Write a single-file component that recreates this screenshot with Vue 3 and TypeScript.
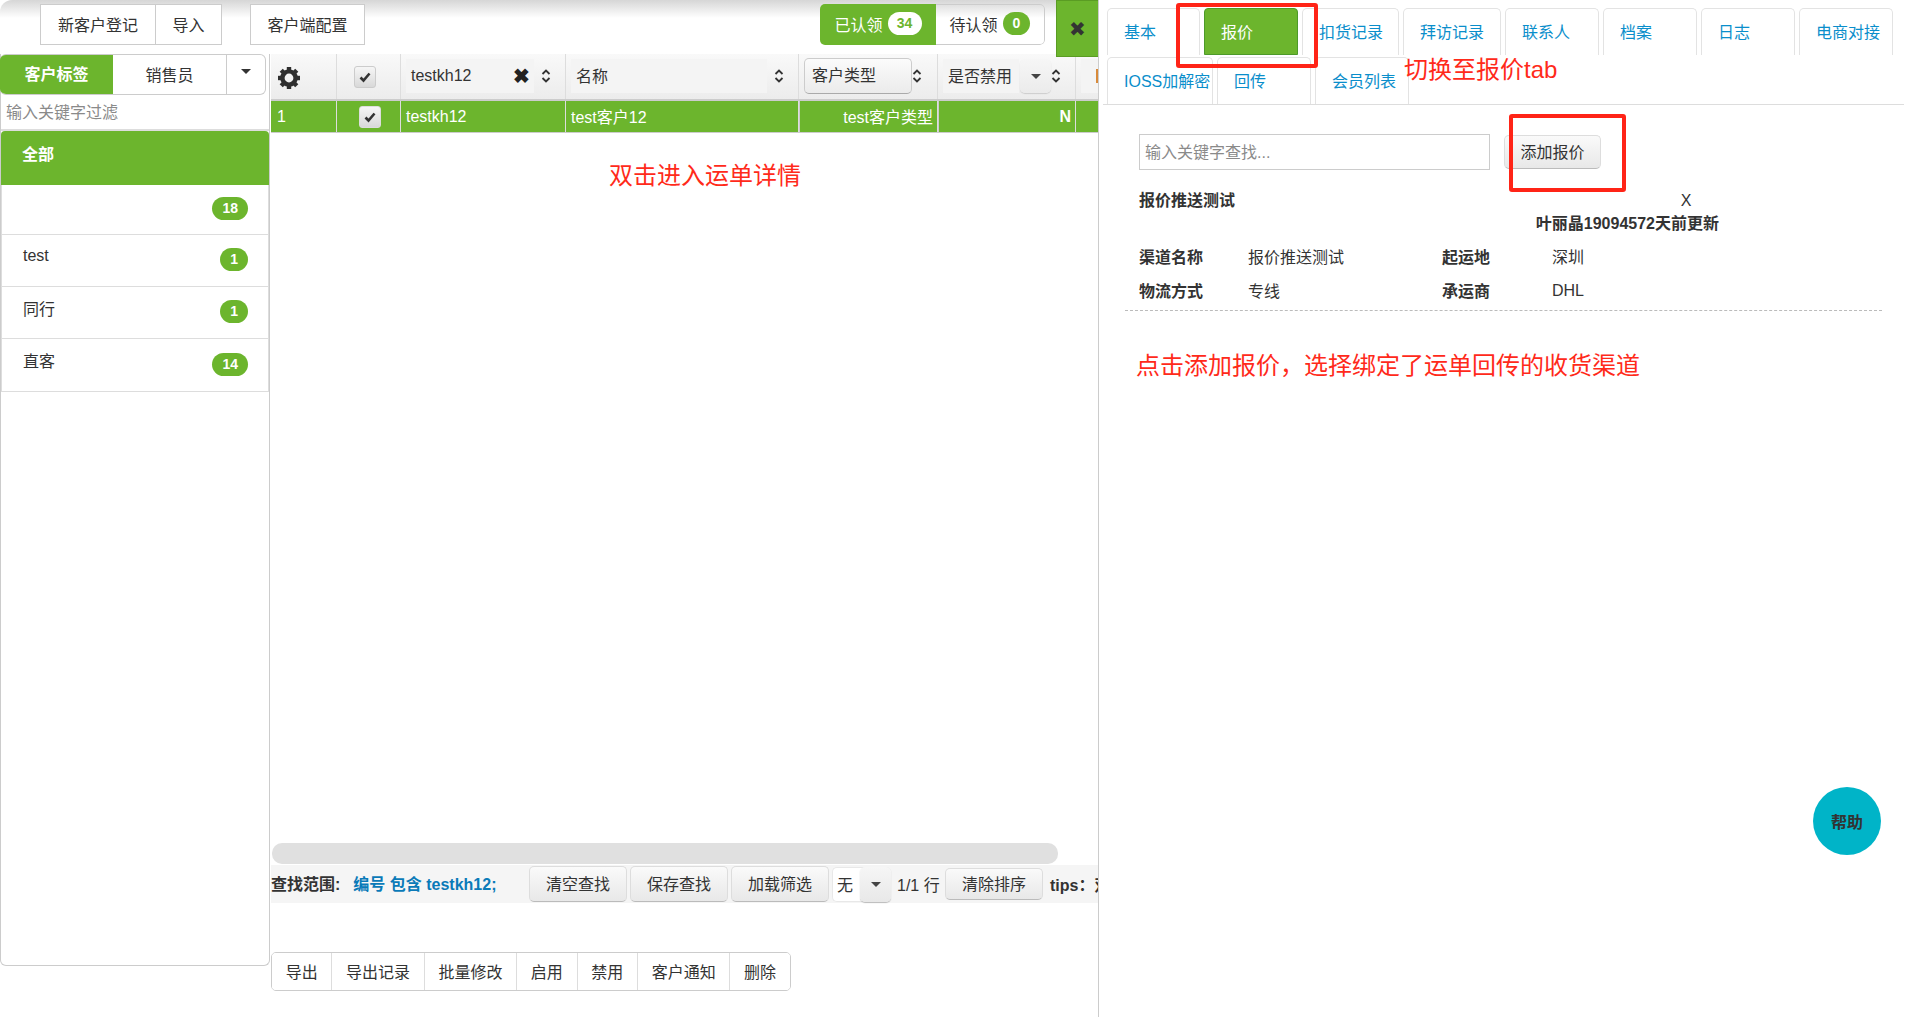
<script setup lang="ts">
const tagRows = [
  { name: "", count: 18, h: 50 },
  { name: "test", count: 1, h: 52 },
  { name: "同行", count: 1, h: 52 },
  { name: "直客", count: 14, h: 53 },
];
const tabs = [
  { label: "基本", w: 93 },
  { label: "报价", w: 94, active: true },
  { label: "扣货记录", w: 97 },
  { label: "拜访记录", w: 98 },
  { label: "联系人", w: 94 },
  { label: "档案", w: 94 },
  { label: "日志", w: 94 },
  { label: "电商对接", w: 94 },
  { label: "IOSS加解密", w: 106 },
  { label: "回传", w: 94 },
  { label: "会员列表", w: 94 },
];
const actions = ["导出", "导出记录", "批量修改", "启用", "禁用", "客户通知", "删除"];
const gearTeeth = [0, 45, 90, 135, 180, 225, 270, 315];
</script>

<template>
  <div class="page">
    <div class="left">
      <div class="topbar">
        <div class="btn-group">
          <button class="tb-btn w116">新客户登记</button>
          <button class="tb-btn w66">导入</button>
        </div>
        <button class="tb-btn w115 cfg">客户端配置</button>
        <div class="claim">
          <div class="claim-on">已认领<span class="pill white">34</span></div>
          <div class="claim-off">待认领<span class="pill green">0</span></div>
        </div>
        <div class="close-x">✖</div>
      </div>

      <div class="main">
        <aside class="side">
          <div class="side-tabs">
            <div class="side-tab on">客户标签</div>
            <div class="side-tab">销售员</div>
            <div class="side-caret"><i class="caret"></i></div>
          </div>
          <input class="side-filter" placeholder="输入关键字过滤" />
          <div class="side-all">全部</div>
          <div v-for="r in tagRows" :key="r.count + r.name" class="side-row" :style="{ height: r.h + 'px' }">
            <span class="side-name">{{ r.name }}</span>
            <span class="pill green">{{ r.count }}</span>
          </div>
        </aside>

        <section class="content">
          <div class="grid-wrap">
            <div class="thead">
              <div class="th">
                <svg class="gear" viewBox="0 0 24 24">
                  <circle cx="12" cy="12" r="6.6" fill="none" stroke="#2f2f2f" stroke-width="4.4" />
                  <rect v-for="a in gearTeeth" :key="a" x="9.8" y="1" width="4.4" height="5" fill="#2f2f2f" :transform="`rotate(${a} 12 12)`" />
                </svg>
              </div>
              <div class="th center">
                <span class="check-box head"><svg viewBox="0 0 16 16"><path d="M3.5 8.5l3 3 6-7" fill="none" stroke="#333" stroke-width="2.6" /></svg></span>
              </div>
              <div class="th">
                <div class="th-input w128"><span>testkh12</span><b class="clear">✖</b></div>
                <svg class="sort" viewBox="0 0 10 16"><path d="M1.5 6l3.5-3.5L8.5 6M1.5 10l3.5 3.5L8.5 10" fill="none" stroke="#333" stroke-width="1.8" /></svg>
              </div>
              <div class="th">
                <div class="th-input w196 cjk">名称</div>
                <svg class="sort" viewBox="0 0 10 16"><path d="M1.5 6l3.5-3.5L8.5 6M1.5 10l3.5 3.5L8.5 10" fill="none" stroke="#333" stroke-width="1.8" /></svg>
              </div>
              <div class="th">
                <div class="th-select">客户类型</div>
                <svg class="sort flush" viewBox="0 0 10 16"><path d="M1.5 6l3.5-3.5L8.5 6M1.5 10l3.5 3.5L8.5 10" fill="none" stroke="#333" stroke-width="1.8" /></svg>
              </div>
              <div class="th">
                <div class="th-input w76 cjk">是否禁用</div>
                <div class="th-caret"><i class="caret dark"></i></div>
                <svg class="sort flush" viewBox="0 0 10 16"><path d="M1.5 6l3.5-3.5L8.5 6M1.5 10l3.5 3.5L8.5 10" fill="none" stroke="#333" stroke-width="1.8" /></svg>
              </div>
              <div class="th last"><div class="th-input clipped"><i class="sliver"></i></div></div>
            </div>
            <div class="tr">
              <div class="td">1</div>
              <div class="td center"><span class="check-box row"><svg viewBox="0 0 16 16"><path d="M3.5 8.5l3 3 6-7" fill="none" stroke="#333" stroke-width="2.6" /></svg></span></div>
              <div class="td">testkh12</div>
              <div class="td cjk">test客户12</div>
              <div class="td right cjk">test客户类型</div>
              <div class="td right bold">N</div>
              <div class="td last"></div>
            </div>
          </div>

          <div class="hscroll"><div class="hscroll-thumb"></div></div>

          <div class="searchbar">
            <div class="scope"><b>查找范围:</b><b class="scope-val">编号 包含 testkh12;</b></div>
            <button class="sb-btn">清空查找</button>
            <button class="sb-btn">保存查找</button>
            <button class="sb-btn">加载筛选</button>
            <div class="sb-select"><span>无</span><div class="sb-caret"><i class="caret dark"></i></div></div>
            <span class="sb-count">1/1 行</span>
            <button class="sb-btn short">清除排序</button>
            <b class="sb-tips">tips：双击</b>
          </div>

          <div class="actions">
            <button v-for="a in actions" :key="a" class="act">{{ a }}</button>
          </div>
        </section>
      </div>
    </div>

    <div class="right">
      <div class="tabs">
        <div v-for="t in tabs" :key="t.label" class="tab" :class="{ active: t.active }" :style="{ width: t.w + 'px' }">{{ t.label }}</div>
      </div>
      <div class="pane">
        <div class="pane-search">
          <input class="pane-input" placeholder="输入关键字查找..." />
          <button class="add-btn">添加报价</button>
        </div>
        <div class="quote-head">
          <b>报价推送测试</b>
          <div class="quote-meta">
            <div class="quote-x">X</div>
            <b>叶丽晶19094572天前更新</b>
          </div>
        </div>
        <div class="quote-info">
          <b>渠道名称</b><span>报价推送测试</span><b>起运地</b><span>深圳</span>
          <b>物流方式</b><span>专线</span><b>承运商</b><span class="dhl">DHL</span>
        </div>
      </div>
      <div class="dash"></div>
    </div>

    <!-- 标注 -->
    <div class="note n1">双击进入运单详情</div>
    <div class="note n2">切换至报价tab</div>
    <div class="note n3">点击添加报价，选择绑定了运单回传的收货渠道</div>
    <div class="red-box b1"></div>
    <div class="red-box b2"></div>
    <div class="help">帮助</div>
  </div>
</template>

<style scoped>
.page { position: relative; display: flex; width: 1908px; height: 1017px; overflow: hidden; background: #fff; color: #333; font-family: "Liberation Sans", "Noto Sans CJK SC", sans-serif; font-size: 16px; }
button { font: inherit; color: #333; }
.left { width: 1098px; flex: none; display: flex; flex-direction: column; }

.topbar { position: relative; height: 54px; flex: none; display: flex; align-items: flex-start; padding: 4px 0 0 40px; box-sizing: border-box; background: linear-gradient(#d6d6d6, #fff 18px); border-top-left-radius: 12px; }
.btn-group { display: flex; }
.tb-btn { height: 41px; background: #fff; border: 1px solid #ccc; padding: 0 0 2px; }
.w116 { width: 116px; }
.w66 { width: 66px; margin-left: 0; border-left: 0; }
.w115 { width: 115px; }
.cfg { margin-left: 28px; }
.claim { display: flex; margin-left: 455px; height: 41px; border-radius: 5px; overflow: hidden; }
.claim-on { width: 116px; background: #6cb52d; color: #fff; display: flex; align-items: center; justify-content: center; gap: 5px; padding-bottom: 2px; box-sizing: border-box; }
.claim-off { width: 109px; border: 1px solid #ccc; border-left: 0; border-radius: 0 5px 5px 0; box-sizing: border-box; display: flex; align-items: center; justify-content: center; gap: 5px; padding-bottom: 2px; }
.pill { display: inline-block; min-width: 27px; height: 23px; line-height: 23px; text-align: center; font-size: 14px; font-weight: 700; border-radius: 12px; box-sizing: border-box; padding: 0 10px; }
.pill.white { background: #fff; color: #6cb52d; width: 34px; padding: 0; }
.pill.green { background: #6cb52d; color: #fff; }
.close-x { position: absolute; top: 0; right: 0; width: 42px; height: 57px; background: #6cb52d; border: 1px solid #5a9c23; border-right: 0; box-sizing: border-box; color: #333; font-size: 20px; display: flex; align-items: center; justify-content: center; z-index: 2; }

.main { flex: 1; display: flex; gap: 1px; min-height: 0; }
.side { width: 270px; height: 912px; flex: none; box-sizing: border-box; border: 1px solid #ccc; border-top: 0; border-radius: 0 0 6px 6px; }
.side-tabs { display: flex; height: 41px; margin-left: -1px; width: 266px; border: 1px solid #ccc; border-left: 0; border-radius: 6px; box-sizing: border-box; overflow: hidden; }
.side-tab { width: 114px; display: flex; align-items: center; justify-content: center; border-right: 1px solid #ccc; box-sizing: border-box; padding-bottom: 2px; }
.side-tab.on { width: 113px; background: #6cb52d; color: #fff; font-weight: 700; border: 0; padding-bottom: 4px; }
.side-caret { flex: 1; display: flex; align-items: center; justify-content: center; padding-bottom: 6px; }
.caret { width: 0; height: 0; border: 5px solid transparent; border-top: 5px solid #333; border-bottom: 0; display: block; }
.caret.dark { border-top-color: #444; }
.side-filter { display: block; width: 268px; height: 36px; margin-top: 0; padding: 2px 5px 0; box-sizing: border-box; border: 0; border-bottom: 2px solid #ddd; font: inherit; outline: none; }
.side-filter::placeholder { color: #8a8a8a; }
.side-all { height: 54px; background: #6cb52d; color: #fff; font-weight: 700; padding: 10px 0 0 21px; box-sizing: border-box; border-radius: 4px 4px 0 0; }
.side-row { display: flex; justify-content: space-between; align-items: center; padding: 0 20px 2px 21px; box-sizing: border-box; border-bottom: 1px solid #ddd; border-left: 1px solid #ddd; border-right: 1px solid #ddd; }
.side-name { margin-top: -8px; }

.content { width: 827px; flex: none; display: flex; flex-direction: column; overflow: hidden; }
.grid-wrap { flex: 1; min-height: 0; }
.thead, .tr { display: grid; grid-template-columns: 66px 64px 165px 233px 139px 138px 22px; }
.thead { height: 47px; background: linear-gradient(#f9f9f9, #ececec); border-bottom: 2px solid #ccc; box-sizing: border-box; }
.th { border-right: 1px solid #ddd; display: flex; align-items: center; padding-left: 5px; box-sizing: border-box; }
.th.center, .td.center { justify-content: center; padding: 0; }
.th.last { padding-left: 5px; border: 0; }
.gear { width: 24px; height: 24px; margin-left: 1px; margin-top: 3px; }
.check-box { display: flex; width: 22px; height: 22px; border: 1px solid #ccc; border-radius: 3px; background: linear-gradient(#f6f6f6, #d9d9d9); box-sizing: border-box; align-items: center; justify-content: center; }
.check-box svg { width: 16px; height: 16px; }
.check-box.head { margin-right: 7px; margin-top: 1px; }
.check-box.row { margin-left: 3px; border-color: #ddd; }
.th-input { height: 34px; background: #f4f4f4; display: flex; align-items: center; justify-content: space-between; padding-left: 5px; box-sizing: border-box; margin-top: -1px; }
.th-input.cjk { padding-bottom: 2px; }
.w128 { width: 128px; }
.w196 { width: 196px; }
.w76 { width: 76px; }
.clear { font-size: 20px; color: #222; margin-right: 4px; }
.sort { width: 10px; height: 16px; margin-left: 7px; flex: none; margin-top: -2px; }
.sort.flush { margin-left: 0; }
.th-select { width: 108px; height: 36px; border: 1px solid #ccc; border-bottom-color: #aaa; border-radius: 5px; background: linear-gradient(#fbfbfb, #ebebeb); padding-left: 7px; line-height: 34px; box-sizing: border-box; margin-top: -1px; }
.th-caret { width: 31px; height: 34px; margin-left: 1px; border-radius: 5px; background: linear-gradient(#f6f6f6, #ebebeb); box-shadow: 0 1px 1px #ccc; display: flex; align-items: center; justify-content: center; margin-top: -1px; flex: none; }
.clipped { width: 17px; position: relative; padding: 0; }
.sliver { display: block; width: 2px; height: 14px; background: #d88a3a; margin-left: 15px; }
.tr { height: 32px; background: #6cb52d; color: #fff; border-bottom: 1px solid #ccc; box-sizing: border-box; }
.td { display: flex; align-items: center; padding-left: 5px; border-right: 1px solid #ddd; box-sizing: border-box; white-space: nowrap; }
.td:first-child { padding-left: 6px; }
.td.cjk { padding-bottom: 2px; }
.td.right { justify-content: flex-end; padding-right: 4px; }
.td.bold { font-weight: 700; }
.td.last { border: 0; }

.hscroll { height: 22px; flex: none; }
.hscroll-thumb { width: 786px; height: 21px; margin-left: 1px; background: #e0e0e0; border-radius: 10px; }
.searchbar { height: 38px; flex: none; background: #f5f5f5; display: flex; align-items: center; white-space: nowrap; margin-bottom: 49px; }
.scope { width: 258px; flex: none; display: flex; gap: 13px; margin-top: -2px; }
.scope-val { color: #0a7ab8; }
.sb-btn { width: 98px; height: 36px; flex: none; margin-right: 3px; border: 1px solid #ddd; border-bottom-color: #bbb; border-radius: 5px; background: linear-gradient(#fafafa, #e8e8e8); padding: 0 0 2px; }
.sb-btn.short { height: 32px; }
.sb-select { display: flex; width: 59px; height: 35px; flex: none; background: #fff; border: 1px solid #e8e8e8; border-right: 0; border-radius: 5px; align-items: center; box-sizing: border-box; padding-left: 4px; justify-content: space-between; }
.sb-caret { width: 31px; height: 35px; flex: none; border-radius: 5px; background: linear-gradient(#f6f6f6, #e8e8e8); box-shadow: 0 1px 1px #bbb; display: flex; align-items: center; justify-content: center; }
.sb-count { margin-left: 6px; width: 48px; flex: none; }
.sb-tips { margin-left: 4px; }

.actions { display: flex; align-self: flex-start; height: 39px; flex: none; margin-bottom: 26px; border: 1px solid #ccc; border-radius: 5px; box-sizing: border-box; overflow: hidden; }
.act { height: 100%; padding: 0 13.7px 2px; border: 0; border-right: 1px solid #ddd; background: #fff; white-space: nowrap; }
.act:last-child { border-right: 0; }

.right { flex: 1; border-left: 1px solid #ccc; box-sizing: border-box; }
.tabs { display: flex; flex-wrap: wrap; gap: 2px 4px; height: 105px; margin: 0 4px 0 4px; padding: 8px 0 0 4px; border-bottom: 1px solid #ddd; box-sizing: border-box; align-content: flex-start; }
.tab { height: 47px; border: 1px solid #e3e3e3; border-bottom: 0; border-radius: 5px 5px 0 0; padding-left: 16px; box-sizing: border-box; color: #0a8ecb; line-height: 48px; white-space: nowrap; }
.tab.active { background: #6cb52d; color: #fff; border: 1px solid #4d9a2a; border-radius: 4px 4px 0 0; }
.pane { padding: 29px 0 0 40px; }
.pane-search { display: flex; align-items: center; }
.pane-input { width: 351px; height: 36px; padding: 2px 5px 0; box-sizing: border-box; border: 1px solid #ccc; font: inherit; outline: none; }
.pane-input::placeholder { color: #8a8a8a; }
.add-btn { width: 97px; height: 34px; margin-left: 14px; border: 1px solid #ddd; border-bottom-color: #bbb; border-radius: 5px; background: linear-gradient(#fafafa, #e8e8e8); padding: 0 0 2px; }
.quote-head { display: flex; justify-content: space-between; width: 580px; margin-top: 19px; line-height: 23px; }
.quote-meta { white-space: nowrap; }
.quote-x { margin-left: 145px; }
.quote-info { display: grid; grid-template-columns: 109px 194px 110px 1fr; grid-auto-rows: 34px; align-items: center; margin-top: 4px; }
.dhl { padding-top: 2px; }
.dash { border-top: 1px dashed #bbb; margin: 3px 26px 0 26px; }

.note { position: absolute; color: #ff2a1a; font-size: 24px; line-height: 30px; white-space: nowrap; }
.n1 { left: 609px; top: 161px; }
.n2 { left: 1404px; top: 55px; }
.n3 { left: 1136px; top: 351px; }
.red-box { position: absolute; border: 4px solid #ff2417; border-radius: 3px; box-sizing: border-box; }
.b1 { left: 1176px; top: 3px; width: 142px; height: 65px; }
.b2 { left: 1509px; top: 114px; width: 117px; height: 78px; }
.help { position: absolute; left: 1813px; top: 787px; width: 68px; height: 68px; border-radius: 50%; background: #00b4c8; color: #333; font-weight: 700; display: flex; align-items: center; justify-content: center; }
</style>
